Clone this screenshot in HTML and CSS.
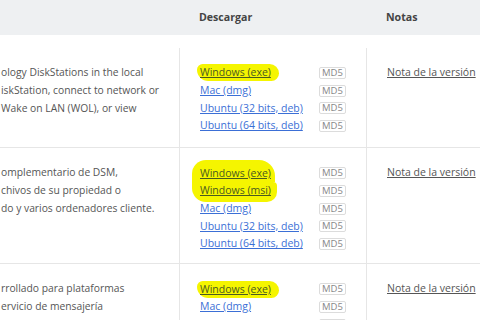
FILE: index.html
```html
<!DOCTYPE html>
<html lang="es">
<head>
  <meta charset="UTF-8">
  <title>Descargas</title>
  <link rel="stylesheet" href="styles.css">
</head>
<body>
  <div class="head">
    <div class="col-desc"></div>
    <div class="col-dl">Descargar</div>
    <div class="col-notes">Notas</div>
  </div>
  <div class="table">
    <div class="row row-first">
      <div class="cell col-desc">
        <p>ology DiskStations in the local<br>iskStation, connect to network or<br>Wake on LAN (WOL), or view</p>
      </div>
      <div class="cell col-dl">
        <div class="item"><a class="hl hl-one" href="#">Windows (exe)</a><span class="md5">MD5</span></div>
        <div class="item"><a href="#">Mac (dmg)</a><span class="md5">MD5</span></div>
        <div class="item"><a href="#">Ubuntu (32 bits, deb)</a><span class="md5">MD5</span></div>
        <div class="item"><a href="#">Ubuntu (64 bits, deb)</a><span class="md5">MD5</span></div>
      </div>
      <div class="cell col-notes"><a class="note" href="#">Nota de la versión</a></div>
    </div>
    <div class="row">
      <div class="cell col-desc">
        <p>omplementario de DSM,<br>chivos de su propiedad o<br>do y varios ordenadores cliente.</p>
      </div>
      <div class="cell col-dl">
        <div class="item"><a class="hl hl-top" href="#">Windows (exe)</a><span class="md5">MD5</span></div>
        <div class="item"><a class="hl hl-bottom" href="#">Windows (msi)</a><span class="md5">MD5</span></div>
        <div class="item"><a href="#">Mac (dmg)</a><span class="md5">MD5</span></div>
        <div class="item"><a href="#">Ubuntu (32 bits, deb)</a><span class="md5">MD5</span></div>
        <div class="item"><a href="#">Ubuntu (64 bits, deb)</a><span class="md5">MD5</span></div>
      </div>
      <div class="cell col-notes"><a class="note" href="#">Nota de la versión</a></div>
    </div>
    <div class="row">
      <div class="cell col-desc">
        <p>rrollado para plataformas<br>ervicio de mensajería</p>
      </div>
      <div class="cell col-dl">
        <div class="item"><a class="hl hl-one" href="#">Windows (exe)</a><span class="md5">MD5</span></div>
        <div class="item"><a href="#">Mac (dmg)</a><span class="md5">MD5</span></div>
        <div class="item"><a href="#">Fedora (32 bits, rpm)</a><span class="md5">MD5</span></div>
      </div>
      <div class="cell col-notes"><a class="note" href="#">Nota de la versión</a></div>
    </div>
  </div>
</body>
</html>
```

FILE: styles.css
```css
html, body {
  height: 320px;
  overflow: hidden;
}
body {
  margin: 0;
  font-family: 'Open Sans', sans-serif;
  font-size: 10.5px;
  color: #555;
  background: #fff;
}
.head, .row {
  display: grid;
  grid-template-columns: 179px 187px 1fr;
}
.head {
  height: 35px;
  align-items: center;
  background: #eef0f2;
  font-weight: bold;
  font-size: 10.6px;
  color: #444;
  margin-bottom: 13px;
}
.head .col-dl, .head .col-notes {
  padding-left: 20px;
  padding-bottom: 1px;
}
.row {
  border-bottom: 1px solid #e6e6e6;
}
.cell {
  padding: 16px 0 10px;
  line-height: 17.8px;
}
.row-first .cell {
  padding-bottom: 12px;
}
.cell.col-desc {
  padding-left: 1px;
}
.cell.col-desc p {
  margin: 0;
  font-size: 10.3px;
  white-space: nowrap;
}
.cell.col-dl, .cell.col-notes {
  border-left: 1px solid #e6e6e6;
  padding-left: 20px;
}
.item {
  display: grid;
  grid-template-columns: 119px auto;
  align-items: center;
  height: 17.8px;
}
.item a {
  color: #3b6fd6;
  justify-self: start;
}
.hl {
  background: #f5f500;
  padding: 0 8px 0 3px;
  margin-left: -3px;
  line-height: 17px;
}
.item a.hl {
  color: #4a5a20;
}
.hl-one {
  border-radius: 6px 10px 8px 12px;
}
.hl-top {
  border-radius: 14px 16px 0 0;
  padding: 5px 4px 0 8px;
  margin-left: -8px;
  margin-top: -5px;
}
.hl-bottom {
  border-radius: 0 4px 10px 14px;
  padding: 0 6px 3px 8px;
  margin-left: -8px;
  margin-bottom: -3px;
}
.md5 {
  width: 25px;
  height: 10px;
  border: 1px solid #dcdcdc;
  border-radius: 2px;
  font-size: 9.5px;
  line-height: 10px;
  text-align: center;
  color: #888;
}
.note {
  color: #555;
}
```
